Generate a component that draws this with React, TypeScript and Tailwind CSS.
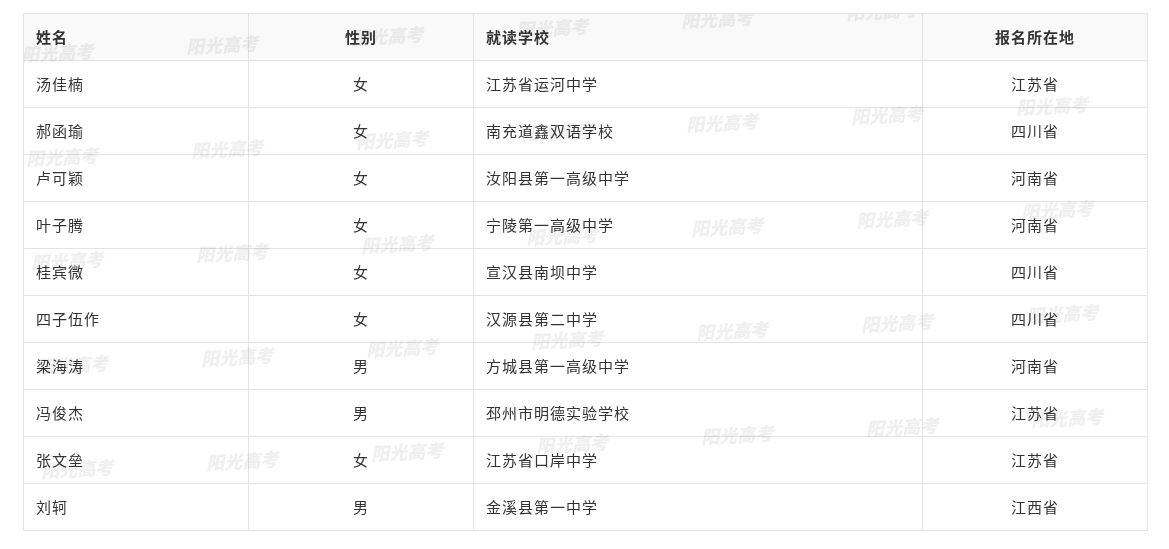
import React from "react";

const rows = [
  { name: "汤佳楠", sex: "女", school: "江苏省运河中学", area: "江苏省" },
  { name: "郝函瑜", sex: "女", school: "南充道鑫双语学校", area: "四川省" },
  { name: "卢可颖", sex: "女", school: "汝阳县第一高级中学", area: "河南省" },
  { name: "叶子腾", sex: "女", school: "宁陵第一高级中学", area: "河南省" },
  { name: "桂宾微", sex: "女", school: "宣汉县南坝中学", area: "四川省" },
  { name: "四子伍作", sex: "女", school: "汉源县第二中学", area: "四川省" },
  { name: "梁海涛", sex: "男", school: "方城县第一高级中学", area: "河南省" },
  { name: "冯俊杰", sex: "男", school: "邳州市明德实验学校", area: "江苏省" },
  { name: "张文垒", sex: "女", school: "江苏省口岸中学", area: "江苏省" },
  { name: "刘轲", sex: "男", school: "金溪县第一中学", area: "江西省" },
];

// watermark lattice, relative to the table box
const marks: { left: number; top: number }[] = [];
for (let r = 0; r < 5; r++) {
  for (let c = 0; c < 8; c++) {
    marks.push({ left: -3 + 5 * r + 165 * c, top: 26 + 104 * r - 8.5 * c });
  }
}

const cell = "flex h-[47px] items-center border-r border-b border-[#e4e4e4] px-3";

export default function App() {
  return (
    <div
      className="min-h-[549px] bg-white pt-[13px] text-[15px] tracking-[1px] text-[#333]"
      style={{ fontFamily: '"Noto Sans CJK SC", "Noto Sans", sans-serif' }}
    >
      <div className="relative ml-[23px] w-[1125px] overflow-hidden border-t border-l border-[#e4e4e4]">
        <div className="grid grid-cols-[225px_225px_449px_225px]">
          <div className={`${cell} bg-[#f9f9f9] font-bold`}>姓名</div>
          <div className={`${cell} justify-center bg-[#f9f9f9] font-bold`}>性别</div>
          <div className={`${cell} bg-[#f9f9f9] font-bold`}>就读学校</div>
          <div className={`${cell} justify-center bg-[#f9f9f9] font-bold`}>报名所在地</div>
          {rows.map((row) => (
            <React.Fragment key={row.name}>
              <div className={cell}>{row.name}</div>
              <div className={`${cell} justify-center`}>{row.sex}</div>
              <div className={cell}>{row.school}</div>
              <div className={`${cell} justify-center`}>{row.area}</div>
            </React.Fragment>
          ))}
        </div>
        <div className="pointer-events-none absolute inset-0 mix-blend-multiply">
          {marks.map((m, i) => (
            <span
              key={i}
              className="absolute -rotate-3 whitespace-nowrap text-[18px] font-black italic leading-6 tracking-normal text-[#efefef]"
              style={{ left: m.left, top: m.top }}
            >
              阳光高考
            </span>
          ))}
        </div>
      </div>
    </div>
  );
}
